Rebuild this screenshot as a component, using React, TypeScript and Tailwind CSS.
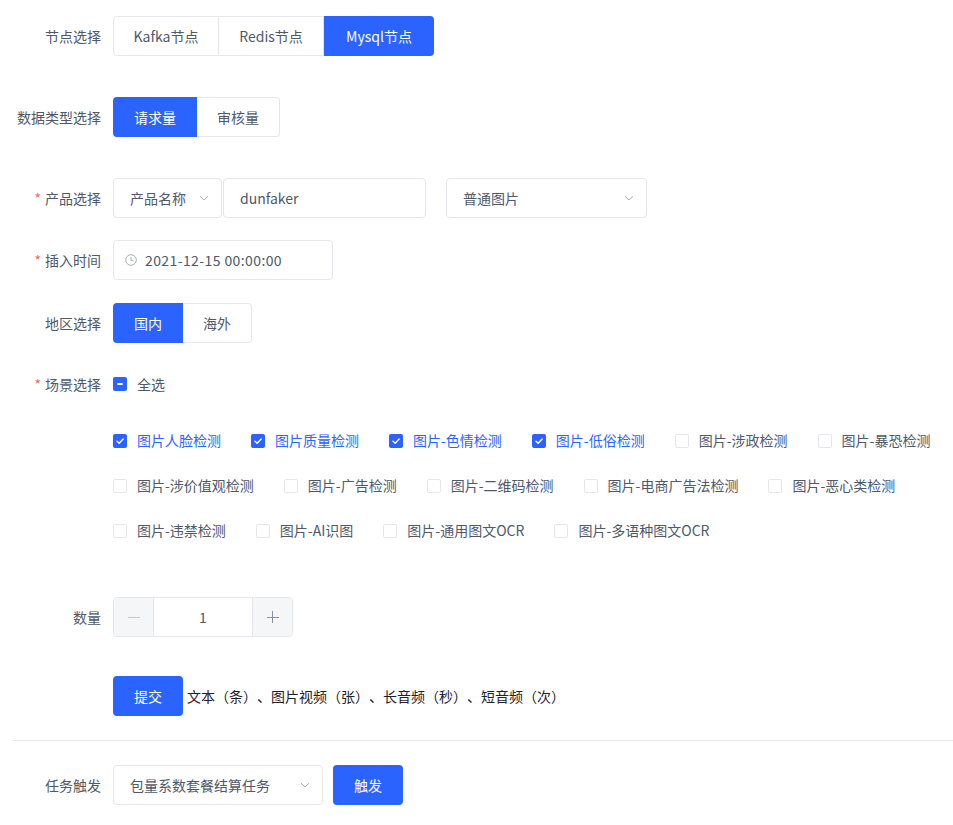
import React from "react";

const BLUE = "bg-[#2b63ff]";

function Label({ text, required }: { text: string; required?: boolean }) {
  return (
    <div className="w-[100px] shrink-0 pr-3 text-right text-[14px] text-[#4e5969] leading-[40px]">
      {required && <span className="text-[#f76560] mr-[4px]">*</span>}
      {text}
    </div>
  );
}

function Chevron({ className = "" }: { className?: string }) {
  return (
    <svg width="12" height="12" viewBox="0 0 12 12" className={className} fill="none">
      <path d="M2 4.2 L6 8 L10 4.2" stroke="#a9aeb8" strokeWidth="1" />
    </svg>
  );
}

function Check({ checked, indeterminate }: { checked?: boolean; indeterminate?: boolean }) {
  if (checked || indeterminate) {
    return (
      <span className={`w-[14px] h-[14px] rounded-[2px] ${BLUE} flex items-center justify-center shrink-0`}>
        {checked ? (
          <svg width="10" height="10" viewBox="0 0 10 10" fill="none">
            <path d="M2 5.2 L4.2 7.3 L8.2 3" stroke="white" strokeWidth="1.4" strokeLinecap="round" strokeLinejoin="round" />
          </svg>
        ) : (
          <span className="w-[6px] h-[2px] bg-white rounded-[1px]" />
        )}
      </span>
    );
  }
  return <span className="w-[14px] h-[14px] rounded-[2px] border border-[#e5e6eb] bg-white shrink-0" />;
}

const scenes: { t: string; c?: boolean }[] = [
  { t: "图片人脸检测", c: true },
  { t: "图片质量检测", c: true },
  { t: "图片-色情检测", c: true },
  { t: "图片-低俗检测", c: true },
  { t: "图片-涉政检测" },
  { t: "图片-暴恐检测" },
  { t: "图片-涉价值观检测" },
  { t: "图片-广告检测" },
  { t: "图片-二维码检测" },
  { t: "图片-电商广告法检测" },
  { t: "图片-恶心类检测" },
  { t: "图片-违禁检测" },
  { t: "图片-AI识图" },
  { t: "图片-通用图文OCR" },
  { t: "图片-多语种图文OCR" },
];

const rows = [scenes.slice(0, 6), scenes.slice(6, 11), scenes.slice(11)];

export default function App() {
  const font = { fontFamily: '"Noto Sans CJK SC", "Noto Sans", sans-serif' };
  return (
    <div className="w-[953px] h-[825px] bg-white pt-4 pl-[13px] text-[14px] [text-spacing-trim:space-all]" style={font}>
      {/* 节点选择 */}
      <div className="flex h-10 mb-[41px]">
        <Label text="节点选择" />
        <div className="flex h-10">
          <div className="w-[106px] h-10 flex items-center justify-center border border-[#e5e6eb] rounded-l-[4px] text-[#4e5969]">Kafka节点</div>
          <div className="w-[105px] h-10 flex items-center justify-center border-y border-r border-[#e5e6eb] text-[#4e5969]">Redis节点</div>
          <div className={`w-[110px] h-10 flex items-center justify-center ${BLUE} rounded-r-[4px] text-white`}>Mysql节点</div>
        </div>
      </div>

      {/* 数据类型选择 */}
      <div className="flex h-10 mb-[41px]">
        <Label text="数据类型选择" />
        <div className="flex h-10">
          <div className={`w-[84px] h-10 flex items-center justify-center ${BLUE} rounded-l-[4px] text-white`}>请求量</div>
          <div className="w-[83px] h-10 flex items-center justify-center border-y border-r border-[#e5e6eb] rounded-r-[4px] text-[#4e5969]">审核量</div>
        </div>
      </div>

      {/* 产品选择 */}
      <div className="flex h-10 mb-[22px]">
        <Label text="产品选择" required />
        <div className="flex h-10 items-center">
          <div className="w-[109px] h-10 flex items-center justify-between pl-4 pr-[11px] border border-[#e5e6eb] rounded-[4px] text-[#4e5969]">
            <span>产品名称</span>
            <Chevron />
          </div>
          <div className="ml-px w-[203px] h-10 flex items-center pl-4 border border-[#e5e6eb] rounded-[4px] text-[#4e5969]">dunfaker</div>
          <div className="ml-[20px] w-[201px] h-10 flex items-center justify-between pl-4 pr-[11px] border border-[#e5e6eb] rounded-[4px] text-[#4e5969]">
            <span>普通图片</span>
            <Chevron />
          </div>
        </div>
      </div>

      {/* 插入时间 */}
      <div className="flex h-10 mb-[23px]">
        <Label text="插入时间" required />
        <div className="w-[220px] h-10 flex items-center pl-[11px] border border-[#e5e6eb] rounded-[4px] text-[#4e5969]">
          <svg width="12" height="12" viewBox="0 0 12 12" fill="none" className="mr-[8px]">
            <circle cx="6" cy="6" r="5.3" stroke="#a9aeb8" strokeWidth="1" />
            <path d="M6 3 V6.3 H8.3" stroke="#a9aeb8" strokeWidth="1" />
          </svg>
          <span className="tracking-[0.4px]">2021-12-15 00:00:00</span>
        </div>
      </div>

      {/* 地区选择 */}
      <div className="flex h-10 mb-[21px]">
        <Label text="地区选择" />
        <div className="flex h-10">
          <div className={`w-[70px] h-10 flex items-center justify-center ${BLUE} rounded-l-[4px] text-white`}>国内</div>
          <div className="w-[69px] h-10 flex items-center justify-center border-y border-r border-[#e5e6eb] rounded-r-[4px] text-[#4e5969]">海外</div>
        </div>
      </div>

      {/* 场景选择 */}
      <div className="flex h-10 mb-[14px]">
        <Label text="场景选择" required />
        <div className="flex items-center h-10">
          <Check indeterminate />
          <span className="ml-[10px] text-[#4e5969]">全选</span>
        </div>
      </div>

      <div className="pl-[100px] mb-[44px]">
        {rows.map((row, i) => (
          <div key={i} className="flex items-center h-[45px]">
            {row.map((s) => (
              <div key={s.t} className="flex items-center mr-[30px]">
                <Check checked={s.c} />
                <span className={`ml-[10px] whitespace-nowrap ${s.c ? "text-[#2b63ff]" : "text-[#4e5969]"}`}>{s.t}</span>
              </div>
            ))}
          </div>
        ))}
      </div>

      {/* 数量 */}
      <div className="flex h-10 mb-[39px]">
        <Label text="数量" />
        <div className="flex h-10 w-[180px] border border-[#e5e6eb] rounded-[4px] overflow-hidden">
          <div className="w-10 h-full bg-[#f5f6f8] border-r border-[#e5e6eb] flex items-center justify-center">
            <span className="w-[12px] h-px bg-[#c2c6cd]" />
          </div>
          <div className="flex-1 flex items-center justify-center text-[#4e5969]">1</div>
          <div className="w-10 h-full bg-[#f5f6f8] border-l border-[#e5e6eb] flex items-center justify-center relative">
            <span className="w-[12px] h-px bg-[#86909c]" />
            <span className="absolute w-px h-[12px] bg-[#86909c]" />
          </div>
        </div>
      </div>

      {/* 提交 */}
      <div className="flex h-10 mb-[24px] items-center">
        <div className="w-[100px] shrink-0" />
        <div className={`w-[70px] h-10 flex items-center justify-center ${BLUE} rounded-[4px] text-white`}>提交</div>
        <span className="ml-[4px] text-[#1d2129]">文本（条）、图片视频（张）、长音频（秒）、短音频（次）</span>
      </div>

      <div className="h-px bg-[#e5e6eb] mb-[24px]" />

      {/* 任务触发 */}
      <div className="flex h-10">
        <Label text="任务触发" />
        <div className="w-[210px] h-10 flex items-center justify-between pl-4 pr-[11px] border border-[#e5e6eb] rounded-[4px] text-[#4e5969]">
          <span>包量系数套餐结算任务</span>
          <Chevron />
        </div>
        <div className={`ml-[10px] w-[70px] h-10 flex items-center justify-center ${BLUE} rounded-[4px] text-white`}>触发</div>
      </div>
    </div>
  );
}
